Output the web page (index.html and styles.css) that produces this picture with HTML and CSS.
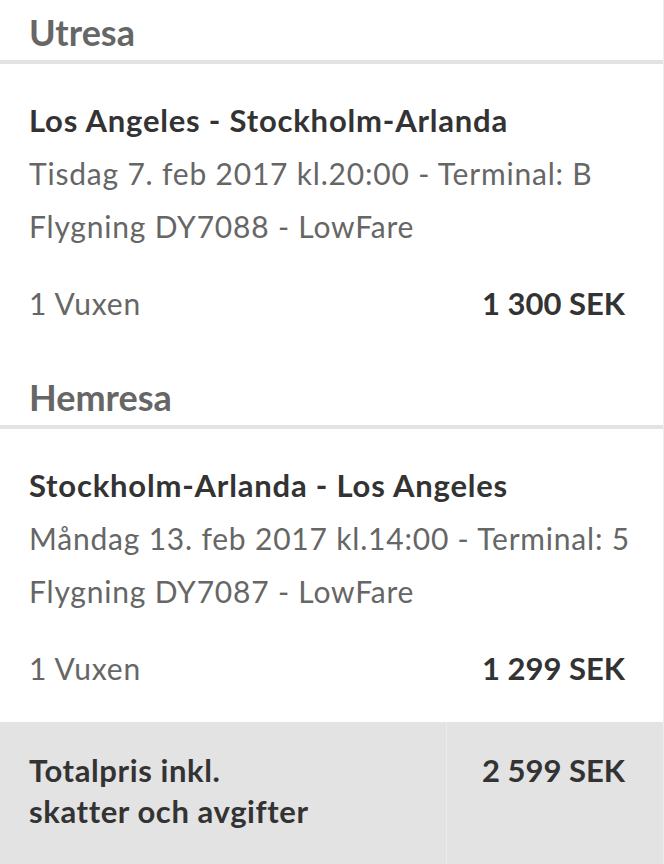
FILE: index.html
```
<!DOCTYPE html>
<html lang="sv">

<head>
    <meta charset="UTF-8">
    <meta name="viewport" content="width=device-width, initial-scale=1.0">
    <title>Din resa</title>
    <link rel="stylesheet" href="styles.css">
</head>

<body>
    <div class="summary">
        <div class="leg">
            <h2 class="leg-title">Utresa</h2>
            <div class="leg-body">
                <div class="route">Los Angeles - Stockholm-Arlanda</div>
                <div class="info">Tisdag 7. feb 2017 kl.20:00 - Terminal: B</div>
                <div class="info">Flygning DY7088 - LowFare</div>
                <div class="pax-row">
                    <span class="pax">1 Vuxen</span>
                    <span class="price">1 300 SEK</span>
                </div>
            </div>
        </div>

        <div class="leg leg-return">
            <h2 class="leg-title">Hemresa</h2>
            <div class="leg-body">
                <div class="route">Stockholm-Arlanda - Los Angeles</div>
                <div class="info">Måndag 13. feb 2017 kl.14:00 - Terminal: 5</div>
                <div class="info">Flygning DY7087 - LowFare</div>
                <div class="pax-row">
                    <span class="pax">1 Vuxen</span>
                    <span class="price">1 299 SEK</span>
                </div>
            </div>
        </div>

        <div class="total">
            <div class="total-label">Totalpris inkl.<br>skatter och avgifter</div>
            <div class="total-price">2 599 SEK</div>
        </div>
    </div>
</body>

</html>
```

FILE: styles.css
```
body {
    margin: 0;
    padding: 0;
    background-color: #fff;
    font-family: Lato, "Open Sans", sans-serif;
}

.summary {
    width: 663px;
    min-height: 864px;
    border-right: 1px solid #ececec;
    display: flex;
    flex-direction: column;
}

.leg {
    height: 365px;
}

.leg-return {
    height: 357px;
}

.leg-title {
    margin: 0;
    padding: 6px 29px 2px;
    font-size: 36px;
    line-height: 52px;
    font-weight: 700;
    color: #666;
    border-bottom: 4px solid #e3e3e3;
}

.leg-body {
    padding: 30px 38px 0 29px;
    font-size: 30px;
    line-height: 53px;
    letter-spacing: 0.8px;
    white-space: nowrap;
}

.route {
    font-weight: 700;
    font-size: 31px;
    letter-spacing: 0.8px;
    color: #333;
}

.info {
    color: #666;
}

.pax-row {
    display: flex;
    justify-content: space-between;
    margin-top: 24px;
}

.pax {
    color: #666;
}

.price {
    font-weight: 700;
    font-size: 31px;
    letter-spacing: 0;
    color: #333;
}

.total {
    flex: 1;
    display: flex;
    background-color: #e3e3e3;
    font-size: 31px;
    font-weight: 700;
    letter-spacing: 0.6px;
    color: #333;
}

.total-label {
    width: 417px;
    padding: 28px 0 0 29px;
    line-height: 41px;
    border-right: 1px solid #ebebeb;
}

.total-price {
    flex: 1;
    text-align: right;
    padding: 28px 38px 0 0;
    line-height: 41px;
    letter-spacing: 0;
}
```
